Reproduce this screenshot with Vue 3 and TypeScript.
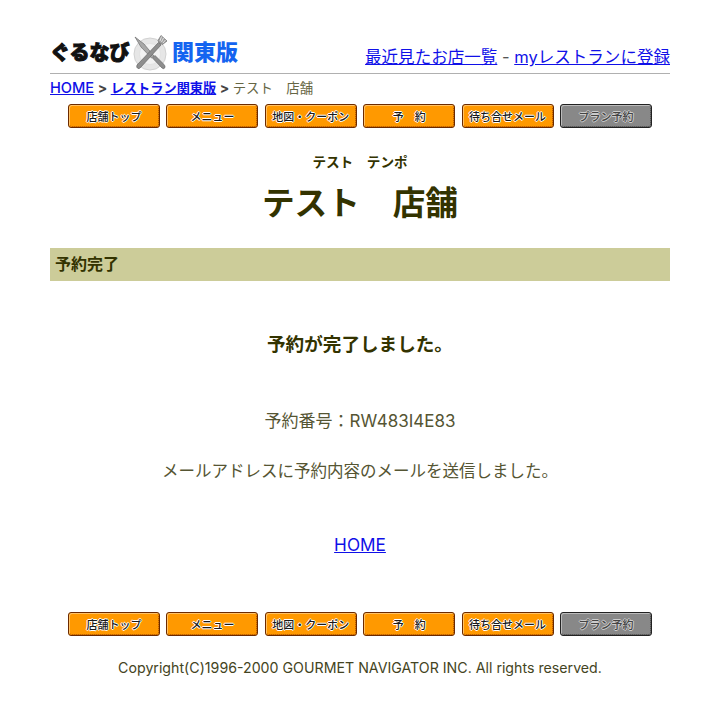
<script setup lang="ts">
interface NavItem { label: string; gray?: boolean }
const navItems: NavItem[] = [
  { label: '店舗トップ' },
  { label: 'メニュー' },
  { label: '地図・クーポン' },
  { label: '予　約' },
  { label: '待ち合せメール' },
  { label: 'プラン予約', gray: true },
]
</script>

<template>
  <div class="page">
    <header class="top">
      <div class="brand">
        <span class="logo-text">ぐるなび</span>
        <svg class="plate" width="36" height="38" viewBox="0 0 36 38" aria-hidden="true">
          <circle cx="17" cy="20" r="16" fill="#e6e6e6" stroke="#d2d2d2" />
          <circle cx="17" cy="20" r="10.5" fill="#f2f2f2" stroke="#dcdcdc" stroke-width=".6" />
          <path d="M2 3 L11 10 L21 22 L18.5 24 L8 13 Z" fill="#a8a8a8" stroke="#6e6e6e" stroke-width=".7" />
          <path d="M19.5 24 L29 34 Q31 35.5 32 33.5 Q32.5 32 30.5 30 L22 21.5 Z" fill="#8e8e8e" stroke="#666" stroke-width=".7" />
          <path d="M28 1.5 L34 7 L29.5 10.5 L26.5 9 L25 6.5 Z" fill="#a0a0a0" stroke="#6e6e6e" stroke-width=".7" />
          <path d="M25.5 8.5 L4 31 Q3 33.5 5 34.5 Q6.5 35 8 33 L28 11 Z" fill="#8e8e8e" stroke="#666" stroke-width=".7" />
          <path d="M28.5 2.5 L27 7 M30.5 4 L28.5 8 M32.5 6 L30 9" stroke="#fff" stroke-width=".7" />
        </svg>
        <span class="region">関東版</span>
      </div>
      <div class="top-links">
        <a href="#" @click.prevent>最近見たお店一覧</a>
        <span class="sep"> - </span>
        <a href="#" @click.prevent>myレストランに登録</a>
      </div>
    </header>

    <nav class="crumbs">
      <a class="home-crumb" href="#" @click.prevent>HOME</a>
      <b class="gt">&gt;</b>
      <a href="#" @click.prevent>レストラン関東版</a>
      <b class="gt">&gt;</b>
      <span class="current">テスト　店舗</span>
    </nav>

    <div class="nav-row">
      <button v-for="item in navItems" :key="item.label" type="button" class="nav-btn" :class="{ gray: item.gray }">{{ item.label }}</button>
    </div>

    <p class="kana">テスト　テンポ</p>
    <h1 class="shop">テスト　店舗</h1>

    <h2 class="bar">予約完了</h2>

    <main class="result">
      <p class="done">予約が完了しました。</p>
      <p class="number">予約番号：RW483I4E83</p>
      <p class="mail">メールアドレスに予約内容のメールを送信しました。</p>
      <p class="home"><a href="#" @click.prevent>HOME</a></p>
    </main>

    <div class="nav-row bottom">
      <button v-for="item in navItems" :key="item.label" type="button" class="nav-btn" :class="{ gray: item.gray }">{{ item.label }}</button>
    </div>

    <footer class="copy">Copyright(C)1996-2000 GOURMET NAVIGATOR INC. All rights reserved.</footer>
  </div>
</template>

<style>
html, body { margin: 0; background: #fff; }
</style>

<style scoped>
.page {
  width: 620px;
  margin: 0 auto;
  padding-top: 30px;
  height: 679px;
  color: #333300;
  font-family: Inter, "Noto Sans CJK JP", sans-serif;
}
a { color: #1010e8; }
p, h1, h2 { margin: 0; }
.top {
  display: flex;
  justify-content: space-between;
  align-items: flex-end;
  height: 43px;
  border-bottom: 1px solid #b0b0b0;
}
.brand { display: flex; align-items: center; height: 40px; }
.logo-text {
  font-size: 20px;
  font-weight: 900;
  color: #111;
  width: 81px;
  white-space: nowrap;
  -webkit-text-stroke: 1px #111;
  margin-bottom: 4px;
}
.plate { margin: 0 3px 0 2px; }
.region { font-size: 22px; font-weight: 900; color: #1464f0; line-height: 1; margin-bottom: 3px; }
.top-links { font-size: 16.55px; line-height: 24px; padding-bottom: 4px; white-space: nowrap; }
.sep { color: #555; }
.crumbs {
  display: flex;
  align-items: baseline;
  gap: 3.5px;
  height: 28px;
  line-height: 27px;
  font-size: 13.2px;
  white-space: nowrap;
}
.crumbs a { font-weight: 700; }
.crumbs .home-crumb { font-size: 14.6px; font-weight: 500; }
.gt { color: #444; font-size: 14px; }
.current { color: #666644; font-size: 13.4px; }
.nav-row {
  display: flex;
  gap: 6.4px;
  padding-left: 18px;
  margin-top: 2px;
}
.nav-btn {
  position: relative;
  width: 92px;
  height: 24px;
  padding: 0;
  box-sizing: border-box;
  background: #ff9900;
  border: 1px solid #6b2a00;
  border-radius: 3px;
  box-shadow: inset 1px 1px 0 #ffc266;
  font-family: inherit;
  font-size: 11px;
  font-weight: 500;
  color: #1a1a1a;
  text-shadow: 1px 0 0 #fff, -1px 0 0 #fff, 0 1px 0 #fff, 0 -1px 0 #fff;
  white-space: nowrap;
}
.nav-btn::after {
  content: "";
  position: absolute;
  inset: 1px 0 0 1px;
  border-right: 1px dotted #a34a00;
  border-bottom: 1px dotted #a34a00;
  border-radius: 2px;
}
.nav-btn.gray {
  background: #888;
  border-color: #222;
  box-shadow: inset 1px 1px 0 #bbb;
  color: #444;
  text-shadow: 1px 0 0 #ccc, -1px 0 0 #ccc, 0 1px 0 #ccc, 0 -1px 0 #ccc;
}
.nav-btn.gray::after { border-color: #444; }
.kana {
  margin-top: 25px;
  text-align: center;
  font-size: 13.6px;
  font-weight: 700;
  line-height: 18px;
}
.shop {
  margin-top: 9px;
  text-align: center;
  font-size: 32.7px;
  font-weight: 700;
  line-height: 46px;
}
.bar {
  margin-top: 22px;
  height: 33px;
  padding-left: 5px;
  background: #cccc99;
  font-size: 16px;
  font-weight: 700;
  line-height: 33px;
}
.result { text-align: center; }
.done { margin-top: 50px; font-size: 18.6px; font-weight: 700; line-height: 26px; }
.number { margin-top: 52px; font-size: 17px; line-height: 24px; color: #555533; }
.mail { margin-top: 26px; font-size: 16.5px; line-height: 24px; color: #555533; }
.home { margin-top: 50px; font-size: 17.2px; line-height: 24px; }
.bottom { margin-top: 55px; }
.copy { margin-top: 21px; text-align: center; font-size: 14.2px; line-height: 22px; color: #444422; }
</style>
